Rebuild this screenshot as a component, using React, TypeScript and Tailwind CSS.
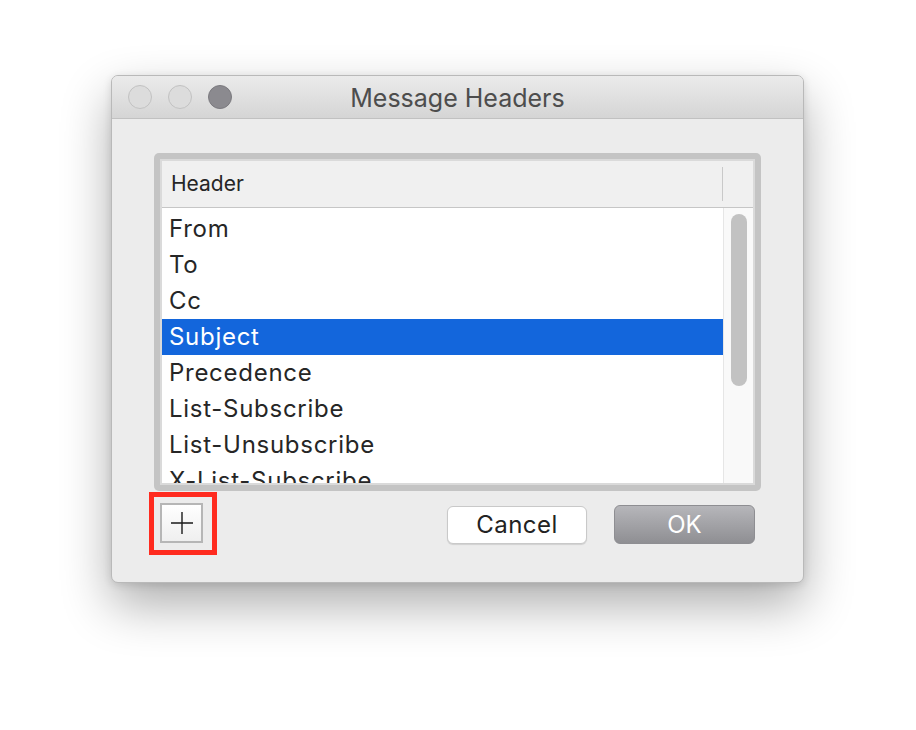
import React from 'react'

const headers = [
    'From',
    'To',
    'Cc',
    'Subject',
    'Precedence',
    'List-Subscribe',
    'List-Unsubscribe',
    'X-List-Subscribe',
]

function TrafficLight({ dark }: { dark?: boolean }) {
    return (
        <div
            className={
                dark
                    ? 'w-[24px] h-[24px] rounded-full bg-[#8b8a8f] border border-[#7b7a7f]'
                    : 'w-[24px] h-[24px] rounded-full bg-[#dcdcdc] border border-[#c2c2c2]'
            }
        />
    )
}

export default function App() {
    return (
        <div
            className="min-h-[730px] w-[916px] bg-white pl-[111px] pt-[75px]"
            style={{ fontFamily: 'Inter, "Noto Sans", "Liberation Sans", sans-serif' }}
        >
            <div className="w-[693px] rounded-[7px] border border-[#b9b9b9] bg-[#ececec] shadow-[0_22px_50px_rgba(0,0,0,0.32),0_2px_8px_rgba(0,0,0,0.12)] overflow-hidden">
                {/* title bar */}
                <div className="grid grid-cols-[1fr_auto_1fr] items-center h-[43px] border-b border-[#c1c1c1] bg-gradient-to-b from-[#ebebeb] to-[#d5d5d5] px-[16px]">
                    <div className="flex items-center gap-[16px]">
                        <TrafficLight />
                        <TrafficLight />
                        <TrafficLight dark />
                    </div>
                    <div className="text-[25px] leading-none text-[#4d4d4d] pt-[2px]">Message Headers</div>
                    <div />
                </div>

                {/* body */}
                <div className="px-[42px] pt-[34px] pb-[27px]">
                    {/* table frame */}
                    <div className="h-[338px] rounded-[5px] bg-[#c4c4c4] p-[6px]">
                        <div className="h-full border-2 border-[#dadada] bg-white flex flex-col">
                            <div className="h-[47px] shrink-0 flex items-center bg-[#f0f0f0] border-b border-[#c6c6c6]">
                                <div className="flex-1 pl-[9px] text-[21px] text-[#262626]">Header</div>
                                <div className="w-px h-[34px] bg-[#c9c9c9]" />
                                <div className="w-[30px]" />
                            </div>
                            <div className="flex-1 flex min-h-0">
                                <div className="flex-1 overflow-hidden pt-[3px]">
                                    {headers.map((h) => (
                                        <div
                                            key={h}
                                            className={
                                                h === 'Subject'
                                                    ? 'h-[36px] flex items-center pl-[7px] text-[24px] tracking-[0.03em] bg-[#1366dc] text-white'
                                                    : 'h-[36px] flex items-center pl-[7px] text-[24px] tracking-[0.03em] text-[#262626]'
                                            }
                                        >
                                            {h}
                                        </div>
                                    ))}
                                </div>
                                <div className="w-[30px] shrink-0 bg-[#f9f9f9] border-l border-[#e6e6e6] pl-[7px] pt-[6px]">
                                    <div className="w-[16px] h-[172px] rounded-full bg-[#c2c2c2]" />
                                </div>
                            </div>
                        </div>
                    </div>

                    {/* bottom row */}
                    <div className="flex items-start">
                        <div className="mt-[1px] -ml-[5px] border-[5px] border-[#ff2b1f] pl-[6px] pr-[9px] pt-[6px] pb-[7px]">
                            <div className="w-[43px] h-[40px] border-2 border-[#b6b6b6] bg-gradient-to-b from-white to-[#efefef] flex items-center justify-center">
                                <svg width="24" height="24" viewBox="0 0 24 24">
                                    <path d="M12 1v22M1 12h22" stroke="#1a1a1a" strokeWidth="1.4" fill="none" />
                                </svg>
                            </div>
                        </div>
                        <div className="flex-1" />
                        <div className="flex items-center gap-[27px] mt-[15px] mr-[6px]">
                            <button className="w-[140px] h-[38px] rounded-[6px] bg-white border border-[#c9c9c9] shadow-[0_1px_1px_rgba(0,0,0,0.12)] text-[24px] tracking-[0.02em] text-[#222] leading-none">
                                Cancel
                            </button>
                            <button className="w-[141px] h-[39px] -mt-[1px] rounded-[6px] bg-gradient-to-b from-[#b6b6ba] to-[#8f8f93] border border-[#8e8e92] text-[24px] text-white leading-none">
                                OK
                            </button>
                        </div>
                    </div>
                </div>
            </div>
        </div>
    )
}
